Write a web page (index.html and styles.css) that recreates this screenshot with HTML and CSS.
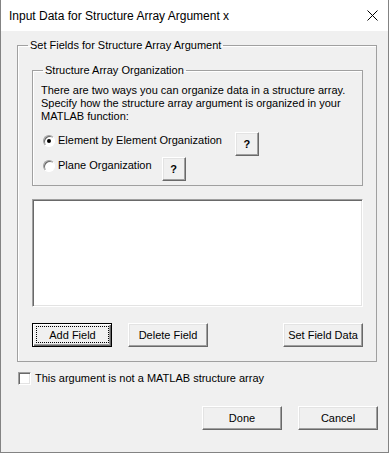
FILE: index.html
```html
<!DOCTYPE html>
<html lang="en">
<head>
    <meta charset="UTF-8">
    <title>Input Data for Structure Array Argument x</title>
    <link rel="stylesheet" href="styles.css">
</head>
<body>
    <div class="window">
        <div class="titlebar">
            <span class="title">Input Data for Structure Array Argument x</span>
            <svg class="close" width="11" height="11" viewBox="0 0 11 11">
                <path d="M0.5 0.5 L10.5 10.5 M10.5 0.5 L0.5 10.5" stroke="#000" stroke-width="1" fill="none"/>
            </svg>
        </div>

        <div class="client">
            <!-- Set fields group -->
            <fieldset class="group">
                <legend>Set Fields for Structure Array Argument</legend>
                <div class="group-body outer-body">

                    <fieldset class="group">
                        <legend>Structure Array Organization</legend>
                        <div class="group-body inner-body">
                            <p class="desc">
                                There are two ways you can organize data in a structure array.<br>
                                Specify how the structure array argument is organized in your<br>
                                MATLAB function:
                            </p>
                            <div class="opt-row first">
                                <label class="radio"><input type="radio" name="org" checked><span>Element by Element Organization</span></label>
                                <button class="btn help">?</button>
                            </div>
                            <div class="opt-row">
                                <label class="radio"><input type="radio" name="org"><span>Plane Organization</span></label>
                                <button class="btn help">?</button>
                            </div>
                        </div>
                    </fieldset>

                    <div class="listbox"></div>

                    <div class="field-buttons">
                        <button class="btn default"><span class="focus">Add Field</span></button>
                        <button class="btn">Delete Field</button>
                        <button class="btn push-right">Set Field Data</button>
                    </div>
                </div>
            </fieldset>

            <label class="check"><input type="checkbox"><span>This argument is not a MATLAB structure array</span></label>

            <div class="dialog-buttons">
                <button class="btn">Done</button>
                <button class="btn">Cancel</button>
            </div>
        </div>
    </div>
</body>
</html>
```

FILE: styles.css
```css
* {
    margin: 0;
    padding: 0;
    box-sizing: border-box;
}

body {
    font-family: "Liberation Sans", Arial, sans-serif;
    font-size: 11px;
    line-height: 13px;
    color: #000;
    background-color: #fff;
}

.window {
    width: 389px;
    height: 453px;
    border: 1px solid #838383;
    border-top: none;
    display: flex;
    flex-direction: column;
}

.titlebar {
    height: 31px;
    background-color: #fff;
    display: flex;
    align-items: center;
    justify-content: space-between;
    padding: 0 10px 0 8px;
}

.title {
    font-size: 12px;
    line-height: 16px;
}

.client {
    flex: 1;
    background-color: #f0f0f0;
    padding-top: 8px;
}

/* group boxes */
fieldset.group {
    border: 1px solid #a0a0a0;
    box-shadow: inset 1px 1px 0 #fff;
    min-width: 0;
}

fieldset.group legend {
    margin-left: 10px;
    padding: 0 2px;
    line-height: 13px;
}

.client > fieldset.group {
    margin-left: 16px;
    width: 360px;
}

.outer-body {
    padding: 12px 13px 14px 14px;
}

.inner-body {
    padding: 7px 8px 4px 8px;
}

.desc {
    line-height: 13px;
}

.opt-row {
    display: flex;
    align-items: flex-start;
    margin-top: 1px;
}

.opt-row.first {
    margin-top: 9px;
}

.radio {
    display: flex;
    align-items: center;
    margin: 2px 12px 0 2px;
}

.opt-row.first .radio {
    margin-right: 13px;
}

.opt-row:not(.first) .radio {
    margin-right: 10px;
}

.radio input {
    appearance: none;
    width: 12px;
    height: 12px;
    border-radius: 50%;
    border: 1px solid;
    border-color: #a0a0a0 #fff #fff #a0a0a0;
    box-shadow: inset 1px 1px 0 #696969;
    background-color: #fff;
    margin-right: 3px;
    display: grid;
    place-items: center;
}

.radio input:checked::after {
    content: "";
    width: 4px;
    height: 4px;
    border-radius: 50%;
    background-color: #000;
}

/* buttons */
.btn {
    font-family: inherit;
    font-size: 11px;
    width: 80px;
    height: 24px;
    background-color: #f0f0f0;
    color: #000;
    border: 1px solid;
    border-color: #fff #696969 #696969 #fff;
    box-shadow: inset -1px -1px 0 #a0a0a0, inset 1px 1px 0 #e3e3e3;
}

.btn.help {
    width: 24px;
    font-weight: bold;
}

.btn.default {
    border: 1px solid #000;
    box-shadow: inset 1px 1px 0 #fff, inset -1px -1px 0 #696969, inset -2px -2px 0 #a0a0a0;
    display: flex;
    padding: 2px 2px 3px 3px;
}

.btn .focus {
    flex: 1;
    border: 1px dotted #000;
    display: flex;
    align-items: center;
    justify-content: center;
}

.listbox {
    margin-top: 13px;
    height: 108px;
    background-color: #fff;
    border: 1px solid;
    border-color: #a0a0a0 #fff #fff #a0a0a0;
    box-shadow: inset 1px 1px 0 #696969, inset -1px -1px 0 #e3e3e3;
}

.field-buttons {
    display: flex;
    gap: 16px;
    margin-top: 16px;
}

.push-right {
    margin-left: auto;
}

/* checkbox */
.check {
    display: flex;
    align-items: center;
    margin: 10px 0 0 17px;
}

.check input {
    appearance: none;
    width: 13px;
    height: 13px;
    border: 1px solid;
    border-color: #a0a0a0 #fff #fff #a0a0a0;
    box-shadow: inset 1px 1px 0 #696969, inset -1px -1px 0 #e3e3e3;
    background-color: #fff;
    margin-right: 4px;
}

.dialog-buttons {
    display: flex;
    justify-content: flex-end;
    gap: 16px;
    margin-top: 21px;
    padding-right: 10px;
}
```
